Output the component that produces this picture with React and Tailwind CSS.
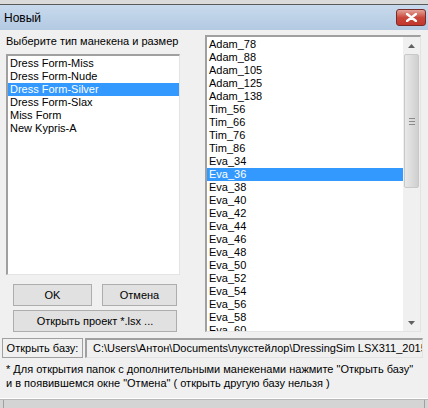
import React from 'react';

const types = ['Dress Form-Miss', 'Dress Form-Nude', 'Dress Form-Silver', 'Dress Form-Slax', 'Miss Form', 'New Kypris-A'];
const sizes = [
  'Adam_78', 'Adam_88', 'Adam_105', 'Adam_125', 'Adam_138',
  'Tim_56', 'Tim_66', 'Tim_76', 'Tim_86',
  'Eva_34', 'Eva_36', 'Eva_38', 'Eva_40', 'Eva_42', 'Eva_44', 'Eva_46', 'Eva_48',
  'Eva_50', 'Eva_52', 'Eva_54', 'Eva_56', 'Eva_58', 'Eva_60',
];

const font = { fontFamily: '"Liberation Sans", Arial, sans-serif' };

const Row = ({ label, selected }) => (
  <div
    className={`h-[13px] leading-[13px] pl-[2px] text-[11px] whitespace-nowrap ${
      selected ? 'bg-[#3399ff] text-white' : 'text-[#000]'
    }`}
  >
    {label}
  </div>
);

const Btn = ({ children, className }) => (
  <button
    className={`h-[22px] border border-[#adadad] bg-[#e1e1e1] text-[11px] text-black leading-none ${className}`}
  >
    {children}
  </button>
);

const ScrollBar = () => (
  <div className="w-[17px] h-full bg-[#f0f0f0] flex flex-col items-center">
    <div className="h-[17px] w-full flex items-center justify-center">
      <svg width="7" height="4" viewBox="0 0 7 4"><path d="M0 4 L3.5 0 L7 4 Z" fill="#606060" /></svg>
    </div>
    <div className="w-[15px] h-[134px] border border-[#c8c8c8] bg-gradient-to-r from-[#e8e8e8] via-[#dcdcdc] to-[#cfcfcf] rounded-[2px] flex flex-col items-center justify-center gap-[2px]">
      <div className="w-[6px] h-px bg-[#8a8a8a]" />
      <div className="w-[6px] h-px bg-[#8a8a8a]" />
      <div className="w-[6px] h-px bg-[#8a8a8a]" />
    </div>
    <div className="flex-1" />
    <div className="h-[17px] w-full flex items-center justify-center">
      <svg width="7" height="4" viewBox="0 0 7 4"><path d="M0 0 L3.5 4 L7 0 Z" fill="#606060" /></svg>
    </div>
  </div>
);

export default function App() {
  return (
    <div className="w-[428px] h-[408px] bg-[#f0f0f0] overflow-hidden flex flex-col" style={font}>
      <div className="h-[5px] bg-[#dadada] border-b border-[#5a5a5a] shrink-0" />
      <div className="h-[25px] shrink-0 bg-gradient-to-b from-[#c8d9ec] to-[#b3cae2] flex items-center justify-between pl-[4px] pr-[2px]">
        <span className="text-[12px] text-black">Новый</span>
        <div className="w-[30px] h-[17px] rounded-[3px] border border-[#7a2a2a] bg-gradient-to-b from-[#e3a39a] via-[#c9473c] to-[#c2372c] flex items-center justify-center">
          <svg width="11" height="9" viewBox="0 0 11 9">
            <path d="M1 1 L10 8 M10 1 L1 8" stroke="#fff" strokeWidth="2.4" strokeLinecap="round" />
          </svg>
        </div>
      </div>

      <div className="flex pl-[6px] pt-[5px] gap-[25px] shrink-0">
        <div className="w-[174px] flex flex-col">
          <div className="text-[11px] leading-[12px] h-[12px] text-black whitespace-nowrap">Выберите тип манекена и размер</div>
          <div className="mt-[7px] h-[221px] bg-white border-t-2 border-l-2 border-t-[#a0a0a0] border-l-[#a0a0a0] border-r border-b border-r-[#e3e3e3] border-b-[#e3e3e3] pt-[1px]">
            {types.map((t, i) => (
              <Row key={t} label={t} selected={i === 2} />
            ))}
          </div>
          <div className="flex gap-[10px] mt-[9px] pl-[7px]">
            <Btn className="w-[79px]">OK</Btn>
            <Btn className="w-[75px]">Отмена</Btn>
          </div>
          <Btn className="w-[164px] ml-[7px] mt-[4px]">Открыть проект *.lsx ...</Btn>
        </div>

        <div className="w-[216px] h-[297px] bg-white border-t-2 border-l-2 border-t-[#a0a0a0] border-l-[#a0a0a0] border-r border-b border-r-[#e3e3e3] border-b-[#e3e3e3] flex overflow-hidden">
          <div className="flex-1 pt-[1px] overflow-hidden">
            {sizes.map((s, i) => (
              <Row key={s} label={s} selected={i === 10} />
            ))}
          </div>
          <ScrollBar />
        </div>
      </div>

      <div className="flex items-center mt-[6px] pl-[2px] gap-[2px] shrink-0">
        <div className="w-[81px] h-[20px] border border-[#a0a0a0] flex items-center justify-center text-[11px] text-black">Открыть базу:</div>
        <div className="w-[338px] h-[20px] border-t-2 border-l-2 border-t-[#a0a0a0] border-l-[#a0a0a0] border-r border-b border-r-[#e3e3e3] border-b-[#e3e3e3] flex items-center pl-[6px] text-[11px] text-black whitespace-nowrap overflow-hidden">
          C:\Users\Антон\Documents\лукстейлор\DressingSim LSX311_2015\
        </div>
      </div>

      <div className="pl-[6px] pt-[4px] text-[11px] leading-[14px] text-black whitespace-nowrap shrink-0">
        <div>* Для открытия папок с дополнительными манекенами нажмите "Открыть базу"</div>
        <div>и в появившемся окне "Отмена" ( открыть другую базу нельзя )</div>
      </div>

      <div className="mt-[8px] h-px bg-white shrink-0" />
      <div className="flex-1 bg-[#d4d4d4] border-t border-[#b8b8b8] flex justify-between px-[3px]">
        <div className="w-px bg-[#a0a0a0]" />
        <div className="w-px bg-[#a0a0a0]" />
      </div>
    </div>
  );
}
